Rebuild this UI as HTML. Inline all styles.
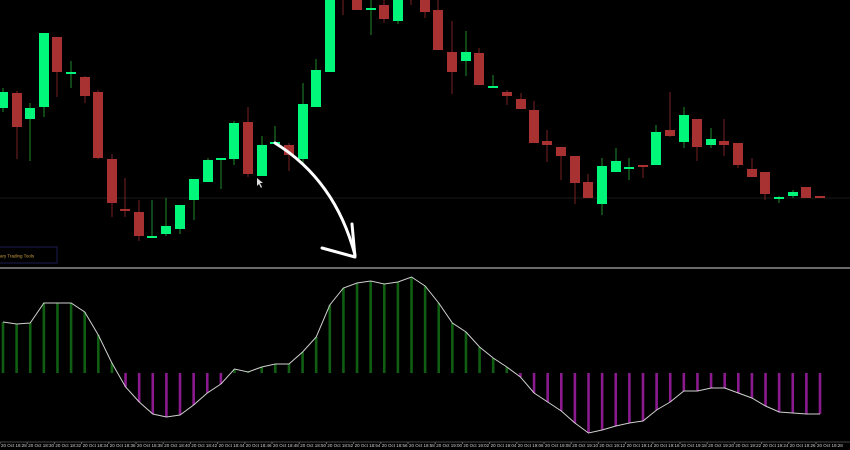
<!DOCTYPE html>
<html><head><meta charset="utf-8"><style>
html,body{margin:0;padding:0;background:#000;width:850px;height:450px;overflow:hidden}
svg{display:block}
</style></head><body>
<svg id="s" width="850" height="450" xmlns="http://www.w3.org/2000/svg" font-family="Liberation Sans, sans-serif">
<rect width="850" height="450" fill="#000"/>
<line x1="0" y1="198" x2="850" y2="198" stroke="#1a1a1a" stroke-width="1"/>
<rect x="-2" y="247" width="59" height="16" fill="none" stroke="#1c1c50" stroke-width="1"/>
<text x="0" y="257.5" font-size="4.5" fill="#c8a040">ary Trading Tools</text>
<rect x="0" y="267" width="850" height="2" fill="#6a6a6a"/>
<line x1="0" y1="442" x2="850" y2="442" stroke="#444" stroke-width="1"/>
<g id="c"></g>
<g id="h"></g>
<g id="ax"></g>
<path d="M275,143 Q335,180 355,255" fill="none" stroke="#fff" stroke-width="3" stroke-linecap="round"/>
<path d="M322,248 L355,257 L352,224" fill="none" stroke="#fff" stroke-width="3" stroke-linecap="round" stroke-linejoin="round"/>
<path d="M257,178 L257,186 L259,184 L261,188 L262,187 L260,183 L263,183 Z" fill="#ddd"/>
</svg>
<script>
var NS="http://www.w3.org/2000/svg";
function el(p,t,a){var e=document.createElementNS(NS,t);for(var k in a)e.setAttribute(k,a[k]);p.appendChild(e);return e;}
var C=[[3,92,108,88,112,'g'],[17,93,127,91,159,'r'],[30,108,119,103,161,'g'],[44,33,107,33,117,'g'],[57,37,72,37,97,'r'],[71,72,74,61,88,'g'],[85,77,96,76,103,'r'],[98,92,158,90,159,'r'],[112,159,203,154,217,'r'],[125,209,211,178,217,'r'],[139,212,236,200,241,'r'],[152,236,238,200,238,'g'],[166,226,234,198,236,'g'],[180,205,229,205,234,'g'],[194,179,200,179,220,'g'],[208,160,182,158,182,'g'],[221,158,160,158,189,'g'],[234,123,159,121,165,'g'],[248,122,174,107,177,'r'],[262,145,176,136,176,'g'],[275,142,144,126,144,'g'],[289,145,155,143,171,'r'],[303,104,159,83,163,'g'],[316,70,107,59,107,'g'],[330,0,72,0,72,'g'],[343,-5,-1,-5,15,'r'],[357,0,10,0,10,'r'],[371,8,10,0,35,'g'],[384,5,19,0,23,'r'],[398,0,21,0,24,'g'],[411,-5,-1,-5,5,'r'],[425,0,12,0,18,'r'],[438,10,50,0,50,'r'],[452,52,72,21,94,'r'],[466,52,61,31,76,'g'],[479,53,85,48,85,'r'],[493,86,88,75,88,'g'],[507,92,96,90,105,'r'],[521,99,109,93,109,'r'],[534,110,143,101,143,'r'],[547,141,145,130,162,'r'],[561,147,156,147,180,'r'],[575,156,183,156,204,'r'],[588,182,198,174,198,'r'],[602,166,204,158,215,'g'],[616,161,172,148,172,'g'],[629,167,169,158,180,'g'],[643,165,167,165,178,'r'],[656,132,165,125,165,'g'],[670,130,136,92,137,'r'],[684,115,142,107,148,'g'],[697,119,147,119,161,'r'],[711,139,145,128,148,'g'],[724,141,145,119,156,'r'],[738,143,165,143,168,'r'],[752,169,177,158,177,'r'],[765,172,194,172,200,'r'],[779,197,199,196,203,'g'],[793,192,196,190,198,'g'],[806,187,198,187,198,'r'],[820,196,198,196,198,'r']];
var cg=document.getElementById('c');
C.forEach(function(c){var g=c[5]=='g';
el(cg,'line',{x1:c[0],x2:c[0],y1:c[3],y2:c[4],stroke:g?'#1f8a2a':'#7a2222','stroke-width':1});
el(cg,'rect',{x:c[0]-5,y:c[1],width:10,height:Math.max(2,c[2]-c[1]),fill:g?'#00f77a':'#a83232'});});
var Y=[322,324,323,303,303,303,312,335,363,387,402,414,417,415,405,393,384,369,372,367,364,364,352,337,305,288,283,281,284,282,277,286,303,323,332,347,358,367,377,393,402,411,423,433,430,426,423,421,410,402,391,391,388,388,393,398,406,412,413,414,414];
var hg=document.getElementById('h'),pts=[];
Y.forEach(function(y,i){var x=3+i*13.6167;pts.push(x.toFixed(1)+','+y);
var up=y<373;el(hg,'rect',{x:x-1.3,y:Math.min(y,373),width:2.6,height:Math.abs(373-y),fill:up?'#0f5e12':'#8a1a8e'});});
el(hg,'polyline',{points:pts.join(' '),fill:'none',stroke:'#d0d0d0','stroke-width':1});
var ax=document.getElementById('ax');
for(var i=0;i<31;i++){var m=28+2*i,h=18+Math.floor(m/60);m=m%60;
var t=el(ax,'text',{x:1+i*27.2,y:447,'font-size':4.5,fill:'#ccc'});t.textContent='20 Oct '+h+':'+(m<10?'0':'')+m;
el(ax,'line',{x1:i*27.2,x2:i*27.2,y1:442,y2:444,stroke:'#666'});}
</script>
</body></html>
